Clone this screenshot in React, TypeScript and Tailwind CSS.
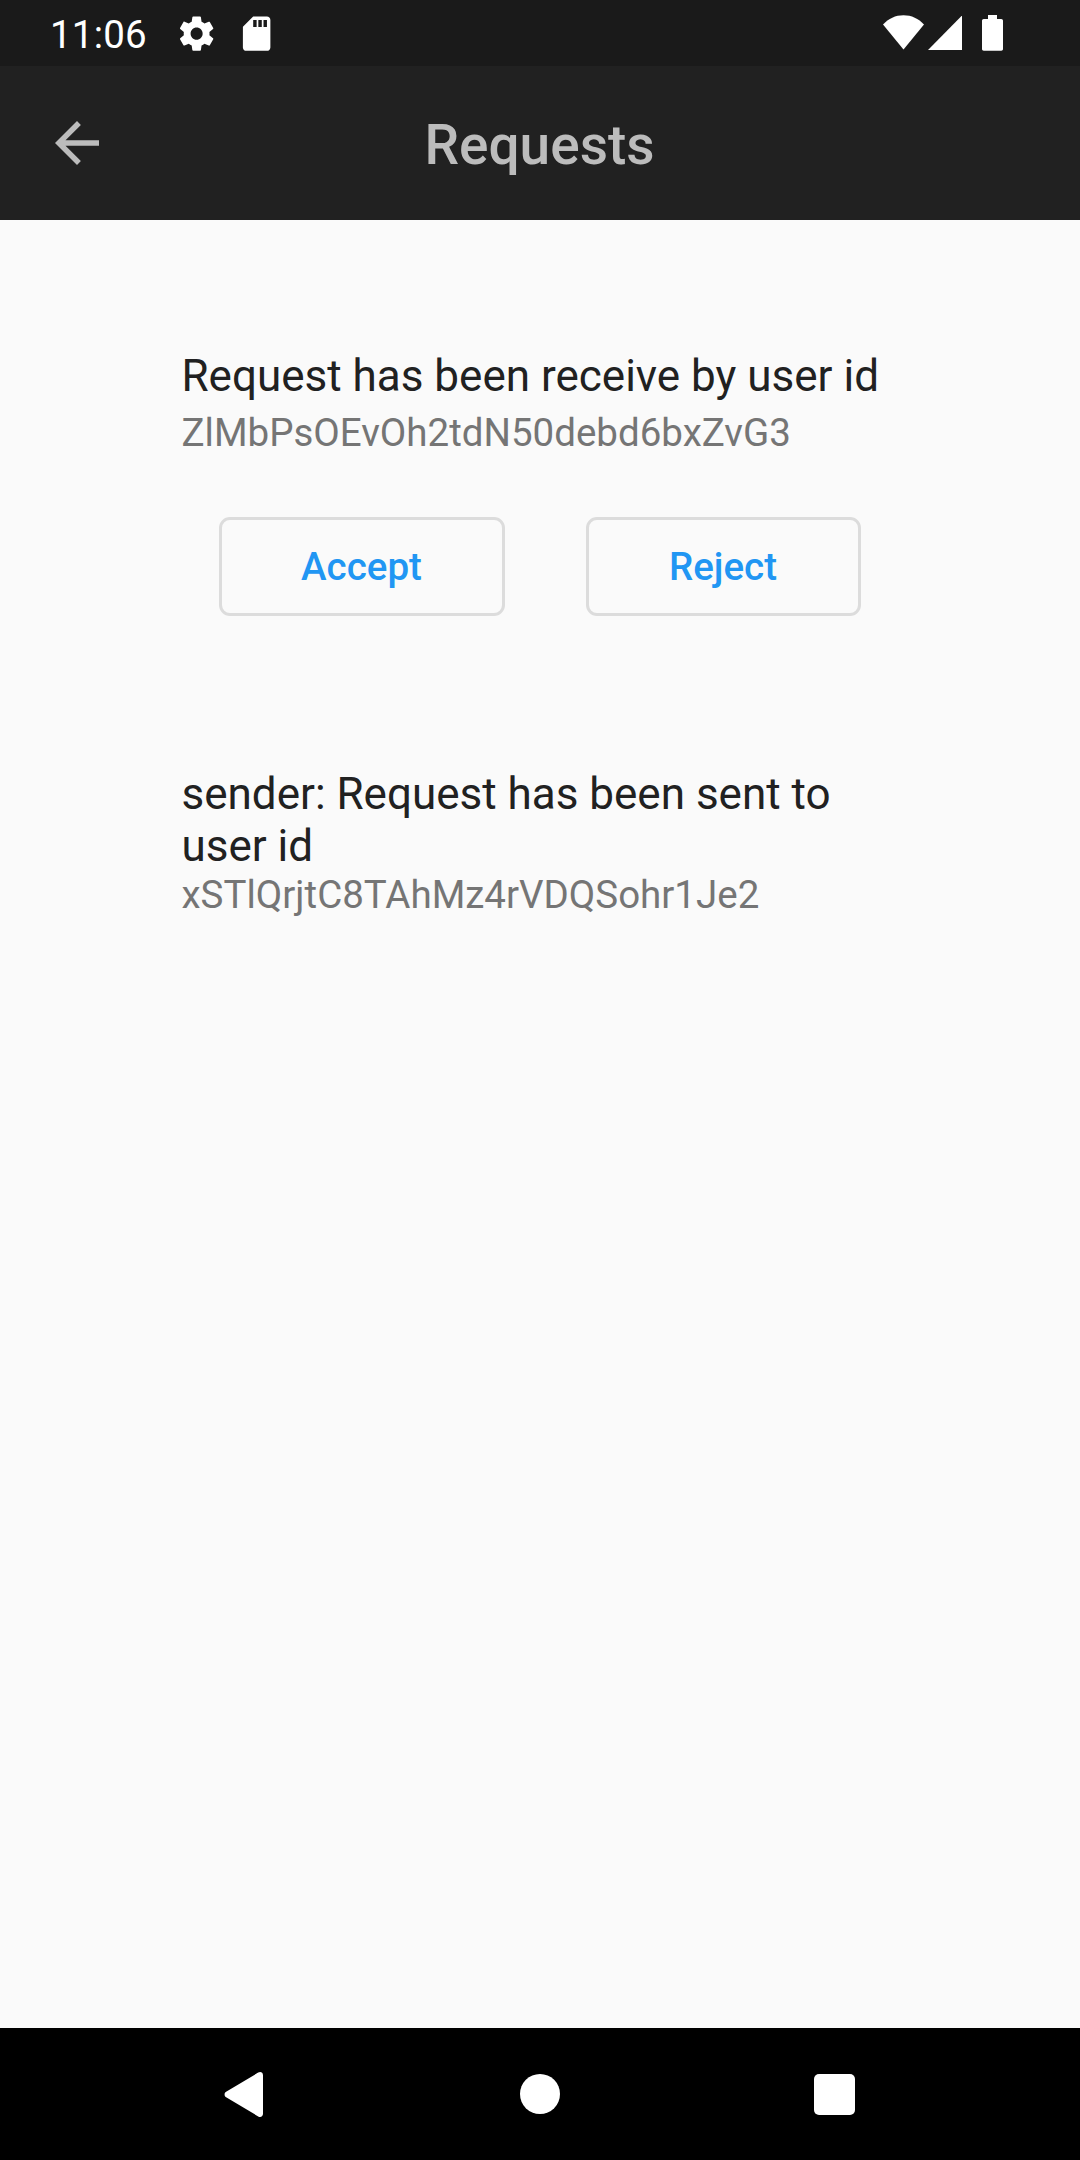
import type { ReactNode } from "react";

function StatusBar() {
  return (
    <div className="flex h-[66px] shrink-0 items-start bg-[#1a1a1a] text-white">
      <div className="mt-[12px] ml-[50px] w-[126px] text-[38.5px] leading-[45px] tracking-[0.2px] whitespace-nowrap">11:06</div>
      <svg className="mt-[13px] h-[41.25px] w-[41.25px]" viewBox="0 0 24 24" fill="currentColor">
        <path d="M19.43 12.98c.04-.32.07-.64.07-.98s-.03-.66-.07-.98l2.11-1.65c.19-.15.24-.42.12-.64l-2-3.46c-.12-.22-.39-.3-.61-.22l-2.49 1c-.52-.4-1.08-.73-1.69-.98l-.38-2.65C14.46 2.18 14.25 2 14 2h-4c-.25 0-.46.18-.49.42l-.38 2.65c-.61.25-1.17.59-1.69.98l-2.49-1c-.23-.09-.49 0-.61.22l-2 3.46c-.13.22-.07.49.12.64l2.11 1.65c-.04.32-.07.65-.07.98s.03.66.07.98l-2.11 1.65c-.19.15-.24.42-.12.64l2 3.46c.12.22.39.3.61.22l2.49-1c.52.4 1.08.73 1.69.98l.38 2.65c.03.24.24.42.49.42h4c.25 0 .46-.18.49-.42l.38-2.65c.61-.25 1.17-.59 1.69-.98l2.49 1c.23.09.49 0 .61-.22l2-3.46c.12-.22.07-.49-.12-.64l-2.11-1.65zM12 15.5c-1.93 0-3.5-1.57-3.5-3.5s1.57-3.5 3.5-3.5 3.5 1.57 3.5 3.5-1.57 3.5-3.5 3.5z" />
      </svg>
      <svg className="mt-[13px] ml-[19px] h-[41.25px] w-[41.25px]" viewBox="0 0 24 24" fill="currentColor">
        <path d="M18 2h-8L4.02 8 4 20c0 1.1.9 2 2 2h12c1.1 0 2-.9 2-2V4c0-1.1-.9-2-2-2zm-6 6.2h-2V4h2v4.2zm3 0h-2V4h2v4.2zm3 0h-2V4h2v4.2z" />
      </svg>
      <div className="mt-[15px] mr-[77px] ml-auto flex">
        <svg className="h-[35px] w-[41px]" viewBox="0 0 41 35" fill="currentColor">
          <path d="M0 9.5C5.5 3.5 12.5 .2 20.5 .2S35.5 3.5 41 9.5L20.5 34.5Z" />
        </svg>
        <svg className="ml-[3.5px] h-[35px] w-[34.5px]" viewBox="0 0 34.5 35" fill="currentColor">
          <path d="M34.5 0V35H0Z" />
        </svg>
        <svg className="ml-[20px] h-[36px] w-[21px]" viewBox="0 0 21 36" fill="currentColor">
          <path d="M6 0h9v4h4.3c.9 0 1.7.8 1.7 1.7v28.300c0 .9-.8 1.700-1.700 1.700H1.700C.8 35.700 0 34.900 0 34V5.700C0 4.800.8 4 1.700 4H6Z" />
        </svg>
      </div>
    </div>
  );
}

function AppBar() {
  return (
    <header className="grid h-[154px] shrink-0 grid-cols-[154px_1fr_155px] items-center bg-[#212121] text-[#bcbcbc]">
      <button className="flex items-center justify-center" aria-label="Back">
        <svg className="h-[66px] w-[66px]" viewBox="0 0 24 24" fill="currentColor">
          <path d="M20 11H7.83l5.59-5.59L12 4l-8 8 8 8 1.41-1.41L7.83 13H20v-2z" />
        </svg>
      </button>
      <h1 className="pt-[4px] text-center text-[55px] leading-[64px] font-medium">Requests</h1>
    </header>
  );
}

function OutlineButton({ children }: { children: ReactNode }) {
  return (
    <button className="flex h-[99px] items-center justify-center rounded-[11px] border-[3px] border-[#dcdcdc] pr-px text-[38.5px] leading-[45px] font-medium text-[#2196f3]">
      {children}
    </button>
  );
}

export default function App() {
  return (
    <div className="flex h-[2160px] w-[1080px] flex-col bg-[#fafafa] font-['Roboto',sans-serif]">
      <StatusBar />
      <AppBar />
      <main className="flex-1 px-[181.5px] pt-[130px]">
        <section>
          <h2 className="text-[44px] leading-[52px] whitespace-nowrap text-[#212121]">Request has been receive by user id</h2>
          <p className="mt-[8px] text-[38.5px] leading-[45px] text-[#757575]">ZlMbPsOEvOh2tdN50debd6bxZvG3</p>
          <div className="mt-[62px] ml-[37.5px] grid grid-cols-[286px_275px] gap-[81px]">
            <OutlineButton>Accept</OutlineButton>
            <OutlineButton>Reject</OutlineButton>
          </div>
        </section>
        <section className="mt-[152px]">
          <h2 className="text-[44px] leading-[52px] text-[#212121]">sender: Request has been sent to user id</h2>
          <p className="text-[38.5px] leading-[45px] text-[#757575]">xSTlQrjtC8TAhMz4rVDQSohr1Je2</p>
        </section>
      </main>
      <nav className="flex h-[132px] shrink-0 items-start bg-black text-white">
        <svg className="mt-[44px] ml-[224px] h-[45px] w-[39px]" viewBox="0 0 39 45" fill="currentColor">
          <path d="M1.7 20 34.2.6C36.500-.8 39 .5 39 3.200V41.800C39 44.500 36.500 45.800 34.200 44.400L1.700 25C.2 24 .2 21 1.700 20Z" />
        </svg>
        <div className="mt-[46px] ml-[257px] h-[40px] w-[40px] rounded-full bg-white" />
        <div className="mt-[46px] ml-[254px] h-[41px] w-[41px] rounded-[5px] bg-white" />
      </nav>
    </div>
  );
}
